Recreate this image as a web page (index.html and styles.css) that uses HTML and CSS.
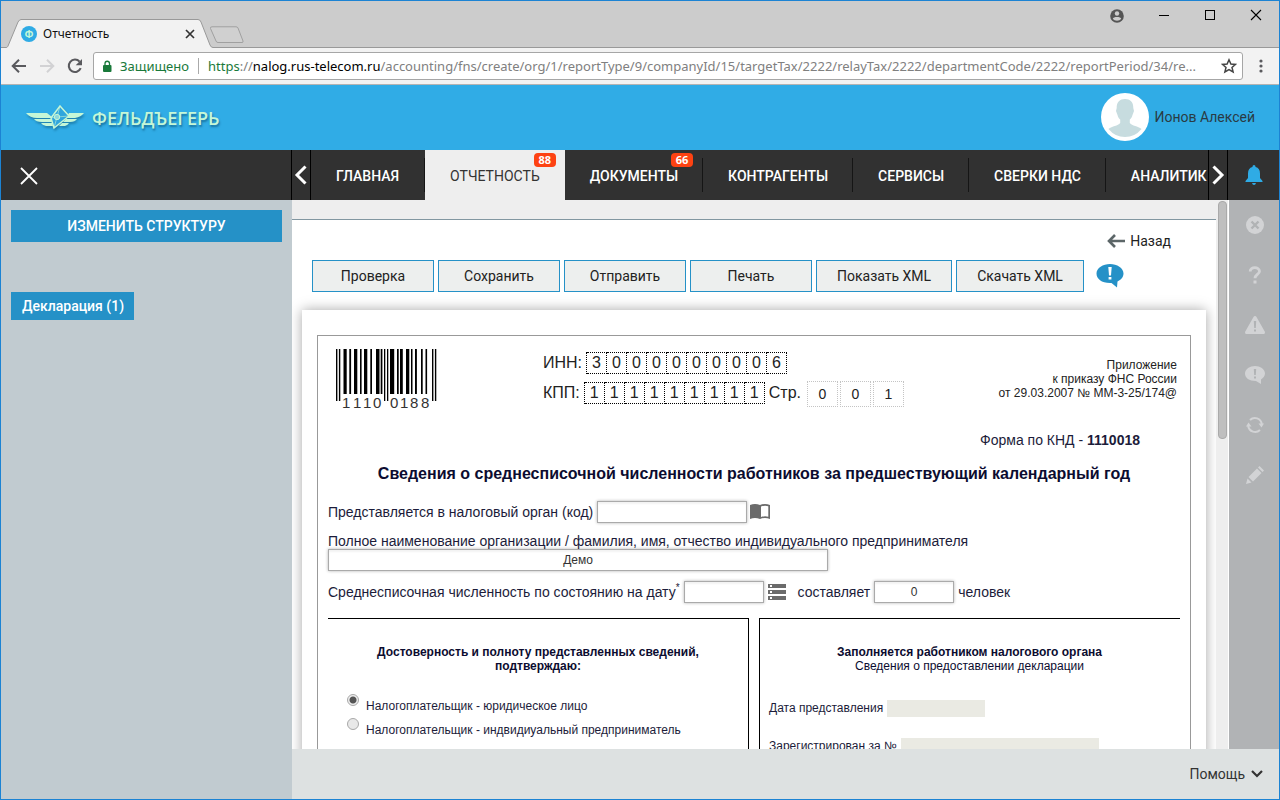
FILE: index.html
```html
<!DOCTYPE html>
<html lang="ru">
<head>
<meta charset="utf-8">
<title>Отчетность</title>
<link rel="stylesheet" href="styles.css">
</head>
<body>
<div class="window">
  <div class="titlebar">
    <div class="tabstrip">
      <div class="browser-tab">
        <svg class="browser-tab-shape" viewBox="0 0 212 29" width="212" height="29"><path d="M0 28.500H5C6 28.500 6.500 28 7 27L17 3Q18.500 .5 20 .5H197Q199 .5 200 3L209 26Q210 28.500 212 28.500V29H0Z" fill="#f2f2f2"/><path d="M0 28.500H5C6 28.500 6.500 28 7 27L17 3Q18.500 .5 20 .5H197Q199 .5 200 3L209 26Q210 28.500 212 28.500" fill="none" stroke="#999"/></svg>
        <span class="favicon">Ф</span>
        <span class="browser-tab-title">Отчетность</span>
        <button class="plain tab-close" aria-label="Закрыть вкладку"><svg width="10" height="10" viewBox="0 0 10 10"><path d="M1 1L9 9M9 1L1 9" stroke="#333" stroke-width="1.700"/></svg></button>
      </div>
      <button class="plain new-tab" aria-label="Новая вкладка"><svg width="36" height="18" viewBox="0 0 36 18"><path d="M3 .8H27Q28.500 .8 29 2L34 15Q34.500 16.500 33 16.500H9Q7.500 16.500 7 15L1.500 2.500Q1 .8 3 .8Z" fill="#d0d0d0" stroke="#a0a0a0"/></svg></button>
    </div>
    <div class="window-controls">
      <button class="plain" aria-label="Профиль"><svg width="14" height="14" viewBox="0 0 14 14"><circle cx="7" cy="7" r="6.800" fill="#555"/><circle cx="7" cy="4.500" r="2.200" fill="#ccc"/><path d="M2.800 9.800C3 7.500 11 7.500 11.200 9.800C9.500 12.300 4.500 12.300 2.800 9.800Z" fill="#ccc"/></svg></button>
      <button class="plain" aria-label="Свернуть"><svg width="12" height="12" viewBox="0 0 12 12"><path d="M1 6.500H11" stroke="#000"/></svg></button>
      <button class="plain" aria-label="Развернуть"><svg width="12" height="12" viewBox="0 0 12 12"><rect x="1.500" y="1.500" width="9" height="9" fill="none" stroke="#000"/></svg></button>
      <button class="plain" aria-label="Закрыть"><svg width="12" height="12" viewBox="0 0 12 12"><path d="M1 1L11 11M11 1L1 11" stroke="#000" stroke-width="1.100"/></svg></button>
    </div>
  </div>
  <div class="toolbar">
    <button class="plain" aria-label="Назад"><svg width="16" height="16" viewBox="0 0 16 16"><path d="M15 8H2M8 1.700L1.700 8L8 14.300" fill="none" stroke="#5a5a5e" stroke-width="2"/></svg></button>
    <button class="plain" aria-label="Вперёд"><svg width="16" height="16" viewBox="0 0 16 16"><path d="M1 8H14M8 1.700L14.300 8L8 14.300" fill="none" stroke="#d2d2d4" stroke-width="2"/></svg></button>
    <button class="plain" aria-label="Обновить"><svg width="16" height="16" viewBox="0 0 16 16"><path d="M13.700 10.200A6.200 6.200 0 1 1 12.600 3.600" fill="none" stroke="#5a5a5e" stroke-width="2.100"/><path d="M15 1V7.300H8.700Z" fill="#5a5a5e"/></svg></button>
    <div class="address">
      <svg width="10" height="13" viewBox="0 0 10 13"><rect x="1" y="5" width="8.500" height="7" rx="1" fill="#19793a"/><path d="M3 5.500V3.500A2.200 2.200 0 0 1 7.500 3.500V5.500" fill="none" stroke="#19793a" stroke-width="1.300"/></svg>
      <span class="secure">Защищено</span>
      <span class="address-url"><span class="scheme">https</span>://<b>nalog.rus-telecom.ru</b>/accounting/fns/create/org/1/reportType/9/companyId/15/targetTax/2222/relayTax/2222/departmentCode/2222/reportPeriod/34/re...</span>
      <button class="plain star" aria-label="В закладки"><svg width="16" height="16" viewBox="0 0 16 16"><path d="M8 1.800L9.900 6L14.500 6.400L11 9.400L12.100 13.900L8 11.500L3.900 13.900L5 9.400L1.500 6.400L6.100 6Z" fill="none" stroke="#444" stroke-width="1.500"/></svg></button>
    </div>
    <button class="plain" aria-label="Меню"><svg width="4" height="14" viewBox="0 0 4 14"><g fill="#5a5a5e"><circle cx="2" cy="2" r="1.600"/><circle cx="2" cy="7" r="1.600"/><circle cx="2" cy="12" r="1.600"/></g></svg></button>
  </div>

  <header class="brandbar">
    <a class="brand" href="#">
      <svg class="brand-mark" width="59" height="26" viewBox="0 0 59 26"><g fill="#c5f7d7"><path d="M0 8H21L26 12V13H11Q4 13 0 8Z"/><path d="M8 14H25L26 17H16Q10 17 8 14Z"/><path d="M15 18H26L27 21H20Q16 20 15 18Z"/><path d="M58 8H43L41 12V13H49Q55 12 58 8Z"/><path d="M51 14H40L37 17H44Q49 17 51 14Z"/><path d="M43 18H36L33 21H39Q42 20 43 18Z"/></g><path d="M34 1L43 11L28 23L25 13Z" fill="#30a6dd" stroke="#c5f7d7" stroke-width="1.500"/><path d="M34 1L31 12L28 23M31 12L43 11M31 12L25 13" stroke="#c5f7d7" stroke-width=".6" fill="none"/><circle cx="31" cy="12" r="2.700" fill="#8ed8dc" stroke="#c5f7d7"/></svg>
      <span>ФЕЛЬДЪЕГЕРЬ</span>
    </a>
    <a class="user" href="#">
      <svg width="48" height="48" viewBox="0 0 48 48"><circle cx="24" cy="24" r="24" fill="#fff"/><path d="M24 6C29 6 32.500 9 32.300 15L33 18L31.500 22C31 24 30 25.500 28.800 26.500V30C31 33 37 33 40.500 36Q34 44 24 44T7.500 36C11 33 17 33 19.200 30V26.500C18 25.500 17 24 16.500 22L15 18L15.700 15C15.500 9 19 6 24 6Z" fill="#c7dcdf"/></svg>
      <span>Ионов Алексей</span>
    </a>
  </header>

  <nav class="mainnav">
    <div class="mainnav-close"><button class="plain" aria-label="Закрыть панель"><svg width="18" height="18" viewBox="0 0 18 18"><path d="M1 1L17 17M17 1L1 17" stroke="#fff" stroke-width="1.800"/></svg></button></div>
    <button class="plain mainnav-arrow" aria-label="Предыдущие разделы"><svg width="14" height="20" viewBox="0 0 14 20"><path d="M11.500 1.500L3 10L11.500 18.500" fill="none" stroke="#fff" stroke-width="3"/></svg></button>
    <div class="mainnav-tabs">
      <a href="#">ГЛАВНАЯ</a>
      <a href="#" class="active">ОТЧЕТНОСТЬ<span class="badge">88</span></a>
      <a href="#">ДОКУМЕНТЫ<span class="badge">66</span></a>
      <a href="#">КОНТРАГЕНТЫ</a>
      <a href="#">СЕРВИСЫ</a>
      <a href="#">СВЕРКИ НДС</a>
      <a href="#">АНАЛИТИК</a>
    </div>
    <button class="plain mainnav-arrow" aria-label="Следующие разделы"><svg width="14" height="20" viewBox="0 0 14 20"><path d="M2.500 1.500L11 10L2.500 18.500" fill="none" stroke="#fff" stroke-width="3"/></svg></button>
    <button class="plain mainnav-bell" aria-label="Уведомления"><svg width="18" height="20" viewBox="0 0 18 20"><path d="M9 0Q10.500 0 10.600 2Q15 3 15 8.500V13L17.500 16V17H.5V16L3 13V8.500Q3 3 7.400 2Q7.500 0 9 0ZM7 18H11Q10.500 20 9 20T7 18Z" fill="#2fabe5"/></svg></button>
  </nav>

  <div class="workspace">
    <aside class="sidebar">
      <button class="structure">ИЗМЕНИТЬ СТРУКТУРУ</button>
      <button class="declaration">Декларация (1)</button>
    </aside>
    <div class="content">
      <div class="content-row">
        <main class="page">
          <div class="page-top"></div>
          <div class="back-row"><a href="#"><svg width="19" height="14" viewBox="0 0 19 14"><path d="M18 7H3M8 1L2 7L8 13" fill="none" stroke="#5c6668" stroke-width="2.600"/></svg>Назад</a></div>
          <div class="actions">
            <button>Проверка</button><button>Сохранить</button><button>Отправить</button><button>Печать</button><button>Показать XML</button><button>Скачать XML</button>
            <button class="plain action-hint" aria-label="Сообщения"><svg width="28" height="25" viewBox="0 0 28 25"><path d="M14 0C21 0 27.500 4 27.500 9.500C27.500 13 25 16 21.500 17.500L21 23.500L15.500 19C6 19.500 .5 15 .5 9.500C.5 4 7 0 14 0Z" fill="#2591c7"/><path d="M12.300 3H15.700L15 11.500H13ZM12.600 13H15.400V15.500H12.600Z" fill="#fff"/></svg></button>
          </div>
          <section class="sheet">
            <form class="frame">
              <div class="form-head">
                <svg class="barcode" width="101" height="62" viewBox="0 0 101 62"><path d="M0 0h1.400v52H0zM2.900 0h1.400v52H2.900zM48 0h1.300v52H48zM51 0h1.300v52H51zM96 0h1.400v52H96zM98.900 0h1.400v52H98.900zM7.500 0h3.200v45H7.500zM13.300 0h1.800v45h-1.800zM18 0h3.300v45H18zM24 0h1.600v45H24zM28 0h3.300v45H28zM34.300 0h1.700v45h-1.700zM40 0h3.500v45H40zM44.700 0h1.700v45h-1.700zM54 0h4.200v45H54zM61 0h1.700v45H61zM64 0h2.800v45H64zM70 0h3.300v45H70zM75 0h1.500v45H75zM79 0h1.900v45H79zM85 0h1.700v45H85zM89.500 0h1.600v45h-1.600z" fill="#000"/><g class="barcode-digits"><text x="6" y="59">1</text><text x="17" y="59">1</text><text x="27" y="59">1</text><text x="37" y="59">0</text><text x="54" y="59">0</text><text x="64" y="59">1</text><text x="74" y="59">8</text><text x="85" y="59">8</text></g></svg>
                <div class="ids">
                  <div class="id-row">ИНН: <span class="cells"><i>3</i><i>0</i><i>0</i><i>0</i><i>0</i><i>0</i><i>0</i><i>0</i><i>0</i><i>6</i></span></div>
                  <div class="id-row">КПП: <span class="cells"><i>1</i><i>1</i><i>1</i><i>1</i><i>1</i><i>1</i><i>1</i><i>1</i><i>1</i></span> Стр. <span class="page-cells"><i>0</i><i>0</i><i>1</i></span></div>
                </div>
                <p class="note">Приложение<br>к приказу ФНС России<br>от 29.03.2007 № ММ-3-25/174@</p>
              </div>
              <p class="knd">Форма по КНД - <b>1110018</b></p>
              <h1>Сведения о среднесписочной численности работников за предшествующий календарный год</h1>
              <div class="field-row first"><label for="organ">Представляется в налоговый орган (код)</label><input id="organ" class="w150"><svg class="book" width="22" height="18" viewBox="0 0 22 18"><path d="M1 2Q6 0 11 2V16Q6 14 1 16ZM11 2Q16 0 21 2V16Q16 14 11 16Z" fill="#6b6b6b"/><path d="M12 3.500Q16 1.900 19.300 3.300V13.800Q16 12.700 12 14Z" fill="#fff"/></svg></div>
              <div class="field-block"><label for="org">Полное наименование организации / фамилия, имя, отчество индивидуального предпринимателя</label><input id="org" class="w500" value="Демо"></div>
              <div class="field-row"><label for="date">Среднесписочная численность по состоянию на дату<sup>*</sup></label><input id="date" class="w80"><svg class="list" width="20" height="16" viewBox="0 0 20 16"><path d="M1 0H19V4H1ZM1 6H19V10H1ZM1 12H19V16H1Z" fill="#6b6b6b"/><path d="M3 1H5V3H3ZM3 7H5V9H3ZM3 13H5V15H3Z" fill="#fff"/></svg><label for="count" class="count-label">составляет</label><input id="count" class="w80" value="0"><span>человек</span></div>
              <div class="columns">
                <div class="column left">
                  <h2>Достоверность и полноту представленных сведений, подтверждаю:</h2>
                  <label class="radio"><input type="radio" name="payer" checked><span>Налогоплательщик - юридическое лицо</span></label>
                  <label class="radio"><input type="radio" name="payer"><span>Налогоплательщик - индвидиуальный предприниматель</span></label>
                </div>
                <div class="column right">
                  <h2>Заполняется работником налогового органа<br><span>Сведения о предоставлении декларации</span></h2>
                  <div class="office-row"><label for="filed">Дата представления</label><input id="filed" class="w98" disabled></div>
                  <div class="office-row"><label for="reg">Зарегистрирован за №</label><input id="reg" class="w198" disabled></div>
                </div>
              </div>
            </form>
          </section>
        </main>
        <div class="scrolltrack"><div class="scrollthumb"></div></div>
        <div class="rail">
          <button class="plain" aria-label="Ошибки"><svg width="18" height="18" viewBox="0 0 18 18"><circle cx="9" cy="9" r="9" fill="#d2d3d5"/><path d="M5.500 5.500L12.500 12.500M12.500 5.500L5.500 12.500" stroke="#b1b3b5" stroke-width="2.400"/></svg></button>
          <button class="plain" aria-label="Справка"><svg width="14" height="18" viewBox="0 0 14 18"><path d="M2.200 5.500C2 .5 11.500 .5 11.500 5.200C11.500 8.500 7 8.500 7 12.300" fill="none" stroke="#d2d3d5" stroke-width="2.800"/><path d="M5.500 14.500H8.500V17.500H5.500Z" fill="#d2d3d5"/></svg></button>
          <button class="plain" aria-label="Предупреждения"><svg width="20" height="18" viewBox="0 0 20 18"><path d="M10 0Q11 0 11.500 1L20 16Q20 18 19 18H1Q0 18 0 16L8.500 1Q9 0 10 0Z" fill="#d2d3d5"/><path d="M8.800 5H11.200L10.800 12H9.200ZM9 13.500H11V15.500H9Z" fill="#b1b3b5"/></svg></button>
          <button class="plain" aria-label="Сообщения"><svg width="20" height="18" viewBox="0 0 20 18"><path d="M10 0C15 0 20 3 20 7.500C20 10 18 12 16 13.500V18L11 15C4 15 0 12 0 7.500C0 3 5 0 10 0Z" fill="#d2d3d5"/><path d="M8.800 3H11.200L10.800 9H9.200ZM9 10.500H11V12.500H9Z" fill="#b1b3b5"/></svg></button>
          <button class="plain" aria-label="Обновить"><svg width="18" height="18" viewBox="0 0 18 18"><path d="M4 4A7 7 0 0 1 15.800 8M14 14A7 7 0 0 1 2.200 10" fill="none" stroke="#d2d3d5" stroke-width="2"/><path d="M12.500 7.500H18L15.500 11.500ZM0 10.500H5.500L2.500 6.500Z" fill="#d2d3d5"/></svg></button>
          <button class="plain" aria-label="Редактировать"><svg width="18" height="18" viewBox="0 0 18 18"><path d="M0 18L1.500 12.500L5.500 16.500ZM2.500 11L11 2.500L15.500 7L7 15.500ZM12 1.500L13.500 0L18 4.500L16.500 6Z" fill="#d2d3d5"/></svg></button>
        </div>
      </div>
      <footer class="help"><button class="plain">Помощь<svg width="12" height="8" viewBox="0 0 12 8"><path d="M1 1L6 6L11 1" fill="none" stroke="#333" stroke-width="2.200"/></svg></button></footer>
    </div>
  </div>
</div>
</body>
</html>
```

FILE: styles.css
```css
* { box-sizing: border-box; }
body { margin: 0; font-family: "Liberation Sans", Arial, sans-serif; color: #222; }
a { color: inherit; text-decoration: none; }
svg { display: block; flex: none; }
.plain { border: 0; background: none; padding: 0; font: inherit; color: inherit; display: flex; align-items: center; justify-content: center; }
.window { display: flex; flex-direction: column; height: 100vh; border: 1px solid #1c83d3; overflow: hidden; }

.titlebar { height: 47px; flex: none; background: #ccc; border-bottom: 1px solid #999; display: flex; justify-content: space-between; }
.tabstrip { display: flex; align-items: flex-end; font: 12px "Noto Sans", sans-serif; }
.browser-tab { position: relative; width: 212px; height: 29px; display: flex; align-items: center; padding-left: 20px; gap: 6px; margin-bottom: -1px; color: #111; }
.browser-tab-shape { position: absolute; left: 0; top: 0; }
.favicon { position: relative; width: 16px; height: 16px; border-radius: 50%; background: #2fabe5; color: #c5f7d7; font-weight: 700; font-size: 10px; line-height: 16px; text-align: center; }
.browser-tab-title { position: relative; flex: 1; }
.tab-close { position: relative; margin-right: 18px; }
.new-tab { margin: 0 0 3px -4px; }
.window-controls { display: flex; align-items: flex-start; padding: 8px 17px 0 0; gap: 34px; }

.toolbar { height: 37px; flex: none; background: #f2f2f2; border-bottom: 1px solid #b3b3b3; display: flex; align-items: center; gap: 12px; padding: 0 16px 0 10px; }
.address { flex: 1; min-width: 0; height: 28px; background: #fff; border: 1px solid #a6a6a6; border-radius: 3px; display: flex; align-items: center; padding: 0 5px 0 8px; margin: 0 4px 0 -2px; font: 13px "Noto Sans", sans-serif; color: #808080; white-space: nowrap; }
.secure { color: #19793a; padding: 0 9px 0 8px; border-right: 1px solid #aaa; line-height: 16px; }
.address-url { flex: 1; min-width: 0; overflow: hidden; padding-left: 9px; }
.address-url b { font-weight: 400; color: #000; }
.scheme { color: #19793a; }

.brandbar { height: 65px; flex: none; background: #30ace6; display: flex; align-items: center; justify-content: space-between; padding: 0 24px 0 25px; }
.brand { display: flex; align-items: center; gap: 7px; color: #c5f7d7; font: 600 18px "Open Sans", sans-serif; text-shadow: 1px 2px 2px rgba(0,60,90,.5); }
.brand-mark { filter: drop-shadow(1px 2px 1px rgba(0,60,90,.4)); }
.user { display: flex; align-items: center; gap: 5px; padding-bottom: 2px; font: 14px Roboto, sans-serif; color: #2a3b44; }

.mainnav { height: 50px; flex: none; background: #313131; color: #fff; display: flex; font: 500 14px Roboto, sans-serif; }
.mainnav-close { width: 290px; display: flex; align-items: center; padding: 2px 0 0 19px; }
.mainnav-arrow { width: 20px; flex: none; border-left: 1px solid #000; border-right: 1px solid #000; }
.mainnav-tabs { flex: 1; min-width: 0; overflow: hidden; display: flex; align-items: center; }
.mainnav-tabs a { position: relative; flex: none; height: 34px; display: flex; align-items: center; padding: 2px 24px 0 25px; border-right: 1px solid #151515; white-space: nowrap; }
.mainnav-tabs a:first-child { padding-right: 25px; }
.mainnav-tabs .active { height: 50px; background: #eee; color: #333; font-weight: 400; border: 0; padding-right: 25px; }
.badge { position: absolute; right: 9px; top: -5px; width: 22px; height: 14px; border-radius: 4px; background: #fd4212; color: #fff; font: 700 11px/14px "Open Sans", sans-serif; text-align: center; }
.active .badge { top: 3px; }
.mainnav-bell { width: 51px; flex: none; }

.workspace { flex: 1; min-height: 0; display: flex; }
.sidebar { width: 291px; flex: none; background: #c1cbd0; padding: 10px; display: flex; flex-direction: column; align-items: flex-start; gap: 50px; }
.structure, .declaration { border: 0; background: #2591c7; color: #fff; font: 500 14px Roboto, sans-serif; }
.structure { width: 100%; height: 32px; }
.declaration { height: 28px; padding: 0 10px 0 11px; }
.content { flex: 1; min-width: 0; display: flex; flex-direction: column; }
.content-row { flex: 1; min-height: 0; display: flex; }
.page { flex: 1; min-width: 0; overflow: hidden; background: #fff; }
.page-top { height: 20px; background: #eee; border-bottom: 1px solid #8297a1; }
.back-row { height: 40px; display: flex; justify-content: flex-end; align-items: center; padding: 2px 45px 0 0; font: 14px Roboto, sans-serif; }
.back-row a { display: flex; align-items: center; gap: 4px; }
.actions { display: flex; gap: 4px; padding-left: 20px; }
.actions button { min-width: 122px; height: 32px; padding: 0 20px; border: 1px solid #2591c7; background: #edefee; color: #222; font: 14px Roboto, sans-serif; white-space: nowrap; }
.actions .action-hint { min-width: 0; width: 28px; border: 0; background: none; padding: 0; margin-left: 8px; }
.sheet { margin: 18px 10px 0; padding: 25px 15px; background: #fff; box-shadow: 0 0 12px rgba(0,0,0,.35); }
.frame { border: 1px solid #999; padding: 0 10px; color: #1c1c3a; font-size: 14px; }
.form-head { display: flex; padding: 13px 3px 0 8px; color: #222; }
.barcode-digits text { font: 15px "Liberation Sans", sans-serif; fill: #333; }
.ids { margin-left: 106px; padding-top: 1px; font-size: 16px; }
.id-row { display: flex; align-items: center; gap: 4px; height: 26px; margin-bottom: 4px; white-space: nowrap; }
.cells { display: flex; border-left: 1px dotted #000; }
.cells i, .page-cells i { font-style: normal; text-align: center; }
.cells i { width: 20px; height: 22px; line-height: 20px; border: 1px dotted #000; border-left: 0; }
.page-cells { display: flex; gap: 2px; margin-left: 2px; padding-top: 2px; font-size: 14px; }
.page-cells i { width: 31px; height: 26px; line-height: 24px; border: 1px dotted #c4c4c4; }
.note { margin: 9px 0 0 auto; text-align: right; font-size: 12px; line-height: 14px; }
.knd { margin: 21px 40px 0 0; text-align: right; line-height: 16px; }
h1 { margin: 16px 0; text-align: center; font-size: 16px; line-height: 20px; color: #0c0c30; }
.field-row { display: flex; align-items: center; height: 24px; gap: 4px; white-space: nowrap; }
.field-row.first { margin-bottom: 9px; }
.frame input:not([type]) { height: 22px; border: 1px solid #aaa; padding: 0; background: #fff; text-align: center; font: 12px "Liberation Sans", sans-serif; color: #333; box-shadow: 0 0 3px rgba(0,0,0,.3), inset 0 2px 2px rgba(0,0,0,.05); }
.frame .w80 { width: 80px; }
.frame .w150 { width: 150px; }
.frame .w500 { width: 500px; }
.frame .w98 { width: 98px; }
.frame .w198 { width: 198px; }
.book { margin-left: -2px; }
.field-block { display: flex; flex-direction: column; align-items: flex-start; margin-bottom: 9px; }
.field-block label { line-height: 16px; }
sup { font-size: 10px; line-height: 0; vertical-align: 6px; }
.list { margin-left: -1px; }
.count-label { margin-left: 7px; }
.columns { display: grid; grid-template-columns: 1fr 1fr; gap: 10px; margin-top: 14px; font-size: 12px; }
.column { border-top: 1px solid #000; height: 440px; padding: 26px 10px; }
.left { border-right: 1px solid #000; }
.right { border-left: 1px solid #000; padding-left: 9px; }
h2 { margin: 0 auto 21px; max-width: 350px; text-align: center; font-size: 12px; line-height: 14px; color: #0c0c30; }
h2 span { font-weight: 400; }
.radio { display: flex; align-items: flex-start; height: 24px; padding-left: 9px; gap: 7px; }
.radio input { appearance: none; margin: 0; width: 12px; height: 12px; border: 1px solid #a8a8a8; border-radius: 50%; background: #e8e8e8; }
.radio input:checked { background: radial-gradient(circle, #555 0 3px, #eee 4px); }
.radio span { padding-top: 5px; }
.office-row { display: flex; align-items: center; gap: 4px; height: 18px; margin-bottom: 20px; }
.right h2 { margin-bottom: 26px; }
.frame .office-row input { height: 17px; border: 0; background: #eaeae3; box-shadow: none; }
.scrolltrack { width: 13px; flex: none; background: #eee; padding: 1px 1px 0 2px; border-right: 1px solid #fff; }
.scrollthumb { height: 238px; background: #bfbfbf; border: 1px solid #aaa; border-radius: 4px; }
.rail { width: 50px; flex: none; background: #b1b3b5; padding-left: 2px; }
.rail .plain { width: 100%; height: 50px; }
.help { height: 50px; flex: none; background: #dde1e1; display: flex; align-items: center; justify-content: flex-end; padding-right: 16px; font: 14px Roboto, sans-serif; color: #333; }
.help .plain { gap: 6px; }
```
